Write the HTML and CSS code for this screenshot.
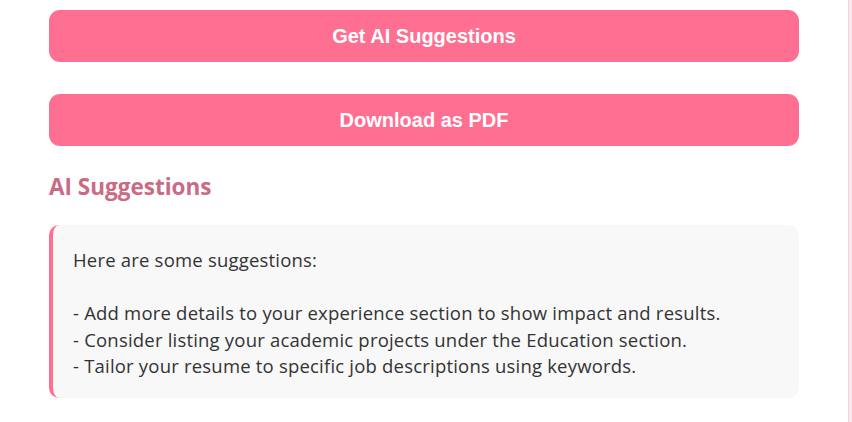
FILE: index.html
```html
<!DOCTYPE html>
<html lang="en">
<head>
<meta charset="utf-8">
<title>AI Suggestions</title>
<link rel="stylesheet" href="styles.css">
</head>
<body>
<div class="panel">
  <div class="content">
    <button class="btn">Get AI Suggestions</button>
    <button class="btn">Download as PDF</button>
    <h2 class="heading">AI Suggestions</h2>
    <div class="suggestions">Here are some suggestions:

- Add more details to your experience section to show impact and results.
- Consider listing your academic projects under the Education section.
- Tailor your resume to specific job descriptions using keywords.</div>
  </div>
</div>
</body>
</html>
```
FILE: styles.css
```css
html, body {
  margin: 0;
  padding: 0;
  height: 100%;
}
body {
  background: #fbe8ee;
  font-family: "Open Sans", "Noto Sans", sans-serif;
  overflow: hidden;
}
.panel {
  width: 848px;
  height: 100%;
  background: #ffffff;
  border-right: 1px solid #f3d3dd;
}
.content {
  width: 750px;
  padding: 10px 0 0 49px;
  display: flex;
  flex-direction: column;
}
.btn {
  height: 52px;
  border: none;
  border-radius: 11px;
  background: #ff6f91;
  color: #ffffff;
  font-family: "Liberation Sans", Arial, sans-serif;
  font-weight: bold;
  font-size: 20px;
  margin: 0;
  padding: 0;
}
.btn + .btn {
  margin-top: 32px;
}
.heading {
  margin: 26px 0 0 0;
  font-size: 22.5px;
  font-weight: 700;
  color: #c96b84;
  line-height: 30px;
}
.suggestions {
  margin-top: 23px;
  background: #f8f8f8;
  border-left: 4px solid #ff6f91;
  border-radius: 10px;
  padding: 22px 20px 18px 20px;
  white-space: pre-wrap;
  color: #333333;
  font-size: 18.5px;
  letter-spacing: 0.2px;
  line-height: 26.6px;
}
```
